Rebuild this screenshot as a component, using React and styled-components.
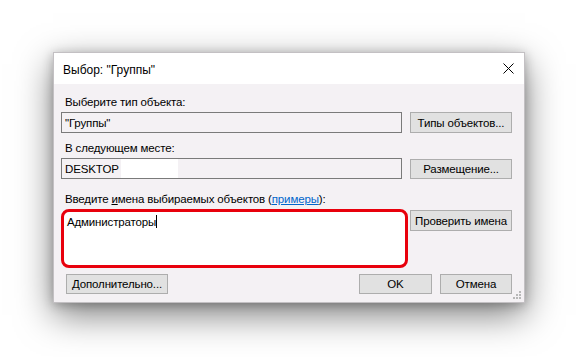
import React from "react";
import styled, { createGlobalStyle } from "styled-components";

const GlobalStyle = createGlobalStyle`
  html, body {
    margin: 0;
    padding: 0;
    background: #ffffff;
  }
  body {
    font-family: "Liberation Sans", Arial, sans-serif;
    font-size: 11.5px;
    letter-spacing: -0.15px;
    color: #000;
  }
`;

const Page = styled.div`
  width: 578px;
  height: 357px;
  padding: 52px 0 0 53px;
  box-sizing: border-box;
`;

const Dialog = styled.div`
  position: relative;
  width: 472px;
  height: 251px;
  display: flex;
  flex-direction: column;
  background: #f4f1f4;
  border: 1px solid rgba(0, 0, 0, 0.2);
  box-sizing: border-box;
  box-shadow: 0 12px 34px rgba(0, 0, 0, 0.5), 0 2px 10px rgba(0, 0, 0, 0.25);
`;

const TitleBar = styled.div`
  height: 31px;
  flex-shrink: 0;
  display: flex;
  align-items: center;
  justify-content: space-between;
  background: #ffffff;
  padding: 0 9px 0 9px;
`;

const Title = styled.div`
  font-size: 12px;
  letter-spacing: 0;
  padding-top: 3px;
`;

const CloseButton = styled.div`
  width: 12px;
  height: 12px;
  margin-right: 1px;
  display: flex;
  align-items: center;
  justify-content: center;
`;

const Body = styled.div`
  flex: 1;
  display: flex;
  flex-direction: column;
  padding: 11px 12px 0 7px;
`;

const Label = styled.div`
  height: 15px;
  line-height: 15px;
  padding-left: 4px;
  margin-bottom: ${(p) => p.$gap || 2}px;
`;

const Row = styled.div`
  display: grid;
  grid-template-columns: 1fr 102px;
  column-gap: 8px;
  align-items: start;
  margin-bottom: ${(p) => p.$gap ?? 8}px;
`;

const Field = styled.div`
  height: 21px;
  box-sizing: border-box;
  border: 1px solid #7a7a7a;
  background: #f4f1f4;
  padding: 0 3px;
  display: flex;
  align-items: center;
`;

const Redacted = styled.span`
  display: inline-block;
  width: 57px;
  height: 19px;
  margin-left: 2px;
  background: #ffffff;
`;

const Highlight = styled.div`
  height: 59px;
  margin-right: -6px;
  box-sizing: border-box;
  border: 3px solid #e8000c;
  border-radius: 8px;
  background: #ffffff;
  padding: 3px 3px;
`;

const Caret = styled.span`
  display: inline-block;
  width: 1px;
  height: 13px;
  background: #000;
  vertical-align: -2px;
`;

const Button = styled.div`
  height: ${(p) => p.$h || 21}px;
  width: ${(p) => (p.$w ? `${p.$w}px` : "auto")};
  box-sizing: border-box;
  border: 1px solid #adadad;
  background: #e1e1e1;
  display: flex;
  align-items: center;
  justify-content: center;
  white-space: nowrap;
  margin-top: ${(p) => p.$top || 0}px;
`;

const Footer = styled.div`
  display: flex;
  align-items: center;
  margin-top: 6px;
  padding-left: 5px;
`;

const Spacer = styled.div`
  flex: 1;
`;

const ButtonGroup = styled.div`
  display: flex;
  gap: 8px;
`;

const Link = styled.span`
  color: #0066cc;
  text-decoration: underline;
`;

const Accel = styled.span`
  text-decoration: underline;
`;

const Grip = styled.svg`
  position: absolute;
  right: 3px;
  bottom: 3px;
`;

export default function App() {
  return (
    <Page>
      <GlobalStyle />
      <Dialog>
        <TitleBar>
          <Title>Выбор: "Группы"</Title>
          <CloseButton>
            <svg width="11" height="11" viewBox="0 0 11 11">
              <path d="M0.5 0.5 L10.5 10.5 M10.5 0.5 L0.5 10.5" stroke="#000" strokeWidth="1" />
            </svg>
          </CloseButton>
        </TitleBar>
        <Body>
          <Label>Выберите тип объекта:</Label>
          <Row>
            <Field>"Группы"</Field>
            <Button>Типы объектов...</Button>
          </Row>
          <Label>В следующем месте:</Label>
          <Row $gap={13}>
            <Field>
              DESKTOP
              <Redacted />
            </Field>
            <Button $top={1} $h={20}>Размещение...</Button>
          </Row>
          <Label $gap={2}>
            Введите <Accel>и</Accel>мена выбираемых объектов (<Link>примеры</Link>):
          </Label>
          <Row $gap={0}>
            <Highlight>
              Администраторы
              <Caret />
            </Highlight>
            <Button $top={1}>Проверить имена</Button>
          </Row>
          <Footer>
            <Button $w={102} $h={20}>Дополнительно...</Button>
            <Spacer />
            <ButtonGroup>
              <Button $w={73} $h={20}>OK</Button>
              <Button $w={72} $h={20}>Отмена</Button>
            </ButtonGroup>
          </Footer>
        </Body>
        <Grip width="8" height="8" viewBox="0 0 8 8">
          <rect x="6" y="0" width="2" height="2" fill="#b8b8b8" />
          <rect x="3" y="3" width="2" height="2" fill="#b8b8b8" />
          <rect x="6" y="3" width="2" height="2" fill="#b8b8b8" />
          <rect x="0" y="6" width="2" height="2" fill="#b8b8b8" />
          <rect x="3" y="6" width="2" height="2" fill="#b8b8b8" />
          <rect x="6" y="6" width="2" height="2" fill="#b8b8b8" />
        </Grip>
      </Dialog>
    </Page>
  );
}
